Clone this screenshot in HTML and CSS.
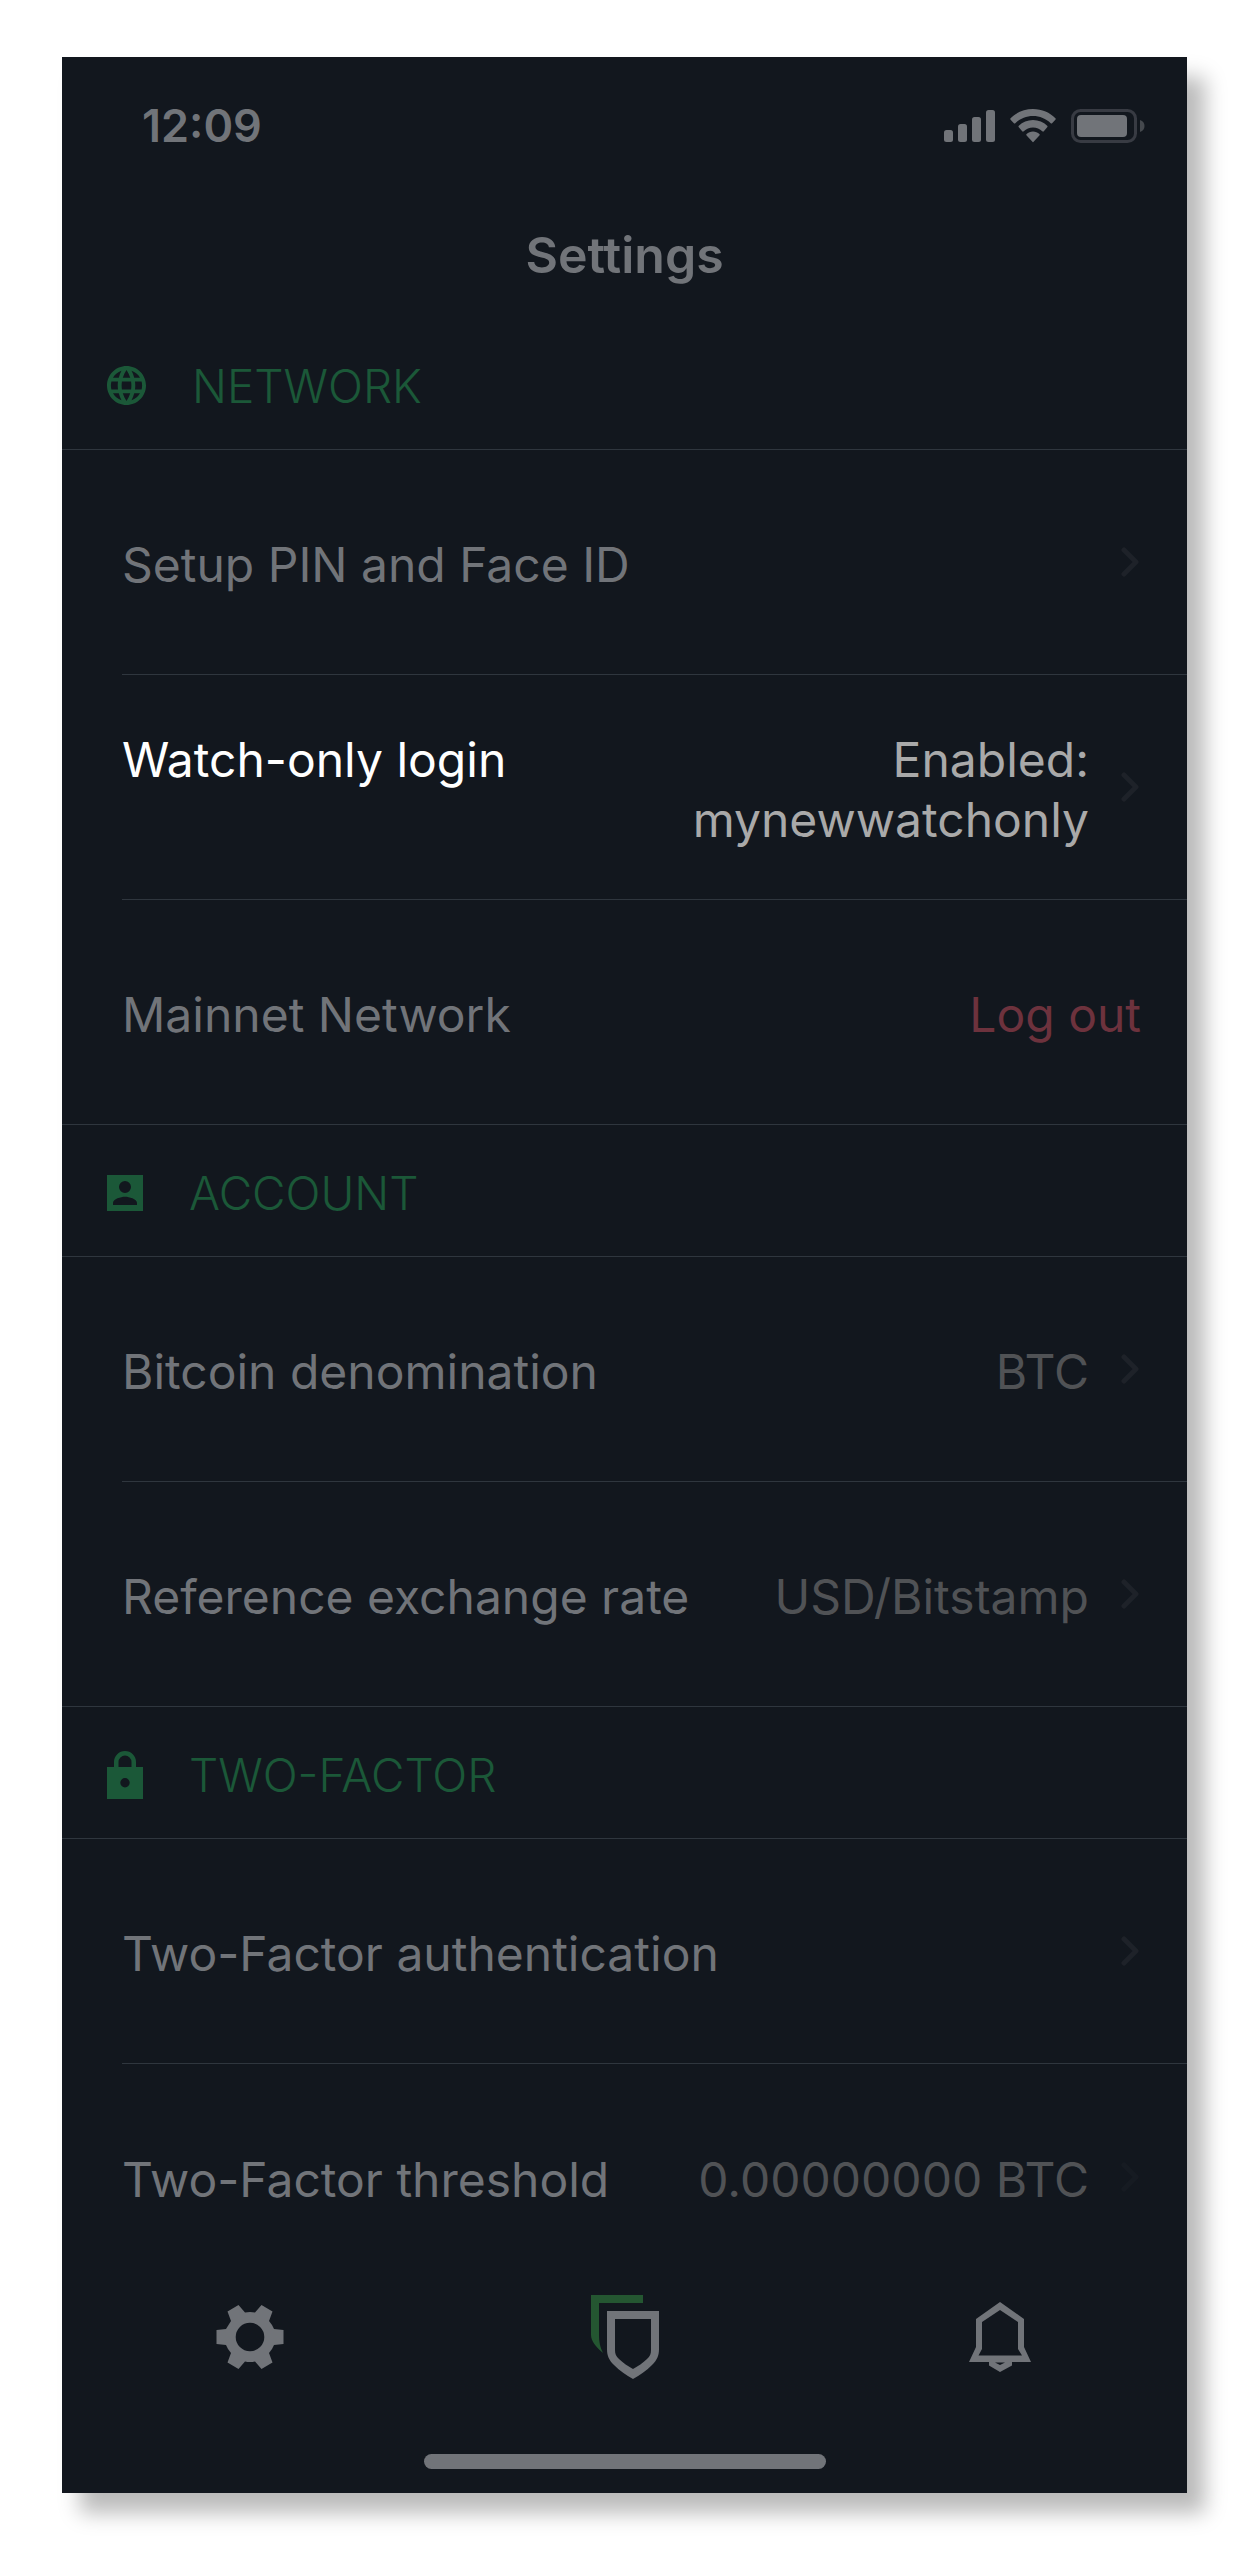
FILE: index.html
```html
<!DOCTYPE html>
<html lang="en">
  <head>
    <meta charset="UTF-8" />
    <meta name="viewport" content="width=device-width, initial-scale=1.0" />
    <title>Settings</title>
    <link rel="stylesheet" href="styles.css">
  </head>
  <body>
    <div class="screen">
      <div class="status-bar">
        <span class="time">12:09</span>
        <div class="status-icons">
          <svg width="51" height="34" viewBox="0 0 51 34" fill="currentColor">
            <rect x="0" y="21" width="9" height="12" rx="2.5" />
            <rect x="14" y="15" width="9" height="18" rx="2.5" />
            <rect x="28" y="8" width="9" height="25" rx="2.5" />
            <rect x="42" y="1" width="9" height="32" rx="2.5" />
          </svg>
          <svg width="46" height="34" viewBox="0 0 46 34" fill="currentColor">
            <path d="M23 0C14 0 6 3.500 .600 9.300a1 1 0 0 0 0 1.400l3.300 3.500a1 1 0 0 0 1.400 0C10 9.700 16.200 7 23 7s13 2.700 17.700 7.200a1 1 0 0 0 1.400 0l3.300-3.500a1 1 0 0 0 0-1.400C40 3.500 32 0 23 0z" />
            <path d="M23 11c-5.500 0-10.500 2.200-14.200 5.800a1 1 0 0 0 0 1.500l3.400 3.900a1 1 0 0 0 1.500.100A13.500 13.500 0 0 1 23 18.500c3.600 0 6.800 1.400 9.300 3.800a1 1 0 0 0 1.500-.100l3.400-3.900a1 1 0 0 0 0-1.500C33.500 13.200 28.500 11 23 11z" />
            <path d="M23 22.500c-2.500 0-4.700 1-6.400 2.600a1 1 0 0 0 0 1.500l5.600 6a1 1 0 0 0 1.600 0l5.600-6a1 1 0 0 0 0-1.500c-1.700-1.600-3.900-2.600-6.400-2.600z" />
          </svg>
          <svg width="74" height="34" viewBox="0 0 74 34">
            <rect class="battery-case" x="1.500" y="1.500" width="63" height="31" rx="8" />
            <rect x="6" y="6" width="50" height="22" rx="4" fill="currentColor" />
            <path class="battery-cap" d="M69 11c3 1 4.500 3.300 4.500 6s-1.500 5-4.500 6z" />
          </svg>
        </div>
      </div>

      <h1 class="page-title">Settings</h1>

      <main>
        <section>
          <h2 class="section-title">
            <svg class="section-icon" width="39" height="39" viewBox="2 2 20 20" fill="currentColor">
              <path d="M11.990 2C6.470 2 2 6.480 2 12s4.470 10 9.990 10C17.520 22 22 17.520 22 12S17.520 2 11.990 2zm6.930 6h-2.950a15.650 15.650 0 0 0-1.380-3.560A8.030 8.030 0 0 1 18.920 8zM12 4.040c.830 1.200 1.480 2.530 1.910 3.960h-3.820c.430-1.430 1.080-2.760 1.910-3.960zM4.260 14C4.100 13.360 4 12.690 4 12s.100-1.360.260-2h3.380c-.080.660-.140 1.320-.140 2s.060 1.340.140 2H4.260zm.820 2h2.950c.320 1.250.780 2.450 1.380 3.560A7.987 7.987 0 0 1 5.080 16zm2.950-8H5.080a7.987 7.987 0 0 1 4.330-3.560A15.650 15.650 0 0 0 8.030 8zM12 19.960c-.830-1.200-1.480-2.530-1.910-3.960h3.820c-.430 1.430-1.080 2.760-1.910 3.960zM14.340 14H9.660c-.090-.660-.160-1.320-.160-2s.070-1.350.160-2h4.680c.090.650.160 1.320.160 2s-.070 1.340-.160 2zm.250 5.560c.600-1.110 1.060-2.310 1.380-3.560h2.950a8.030 8.030 0 0 1-4.330 3.560zM16.360 14c.080-.660.140-1.320.140-2s-.060-1.340-.140-2h3.380c.160.640.260 1.310.260 2s-.100 1.360-.260 2h-3.380z" />
            </svg>
            NETWORK
          </h2>
          <a class="row" href="#">
            <span class="row-body"><span class="label">Setup PIN and Face ID</span></span>
            <svg class="chevron" viewBox="0 0 18 30"><path d="M3 3l12 12L3 27" /></svg>
          </a>
          <a class="row row-active" href="#">
            <span class="row-body">
              <span class="label">Watch-only login</span>
              <span class="value">Enabled: mynewwatchonly</span>
            </span>
            <svg class="chevron" viewBox="0 0 18 30"><path d="M3 3l12 12L3 27" /></svg>
          </a>
          <div class="row row-last">
            <span class="row-body">
              <span class="label">Mainnet Network</span>
              <button type="button" class="logout">Log out</button>
            </span>
          </div>
        </section>

        <section>
          <h2 class="section-title">
            <svg class="section-icon" width="36" height="36" viewBox="0 0 36 36">
              <path fill="currentColor" fill-rule="evenodd" d="M0 0h36v36H0zM18 6a6 6 0 1 0 0 12a6 6 0 0 0 0-12zM6 30h24v-2c0-4-8-6.200-12-6.200S6 24 6 28z" />
            </svg>
            ACCOUNT
          </h2>
          <a class="row" href="#">
            <span class="row-body">
              <span class="label">Bitcoin denomination</span>
              <span class="value">BTC</span>
            </span>
            <svg class="chevron" viewBox="0 0 18 30"><path d="M3 3l12 12L3 27" /></svg>
          </a>
          <a class="row row-last" href="#">
            <span class="row-body">
              <span class="label">Reference exchange rate</span>
              <span class="value">USD/Bitstamp</span>
            </span>
            <svg class="chevron" viewBox="0 0 18 30"><path d="M3 3l12 12L3 27" /></svg>
          </a>
        </section>

        <section>
          <h2 class="section-title">
            <svg class="section-icon" width="36" height="48" viewBox="0 0 36 48">
              <path fill="currentColor" fill-rule="evenodd" d="M0 16h7v-5a11 11 0 0 1 22 0v5h7v32H0zM11.500 16h13v-5a6.500 6.500 0 0 0-13 0zM18 27a4.700 4.700 0 1 0 0 9.400a4.700 4.700 0 0 0 0-9.400z" />
            </svg>
            TWO-FACTOR
          </h2>
          <a class="row" href="#">
            <span class="row-body"><span class="label">Two-Factor authentication</span></span>
            <svg class="chevron" viewBox="0 0 18 30"><path d="M3 3l12 12L3 27" /></svg>
          </a>
          <a class="row row-faded" href="#">
            <span class="row-body">
              <span class="label">Two-Factor threshold</span>
              <span class="value">0.00000000 BTC</span>
            </span>
            <svg class="chevron" viewBox="0 0 18 30"><path d="M3 3l12 12L3 27" /></svg>
          </a>
        </section>
      </main>

      <nav class="tab-bar">
        <a href="#" aria-label="Settings">
          <svg width="68" height="68" viewBox="-34 -34 68 68" fill="currentColor">
            <path fill-rule="evenodd" d="M-24 -8L-19 -16L-22.500 -25.500L-11.500 -32L-5 -24.500Q0 -25.500 5 -24.500L11.500 -32L22.500 -25.500L19 -16Q22.500 -12 24 -8L33.500 -7V7L24 8Q22.500 12 19 16L22.500 25.500L11.500 32L5 24.500Q0 25.500 -5 24.500L-11.500 32L-22.500 25.500L-19 16Q-22.500 12 -24 8L-33.500 7V-7ZM0 -14.300a14.300 14.300 0 1 0 0 28.600a14.300 14.300 0 0 0 0-28.600z" />
          </svg>
        </a>
        <a href="#" aria-label="Wallets">
          <svg width="68" height="84" viewBox="0 0 68 84">
            <path class="shield-back" d="M0 0h52v8H8v32c0 7 1 12 4 18C5 52 0 46 0 40z" />
            <path fill="currentColor" fill-rule="evenodd" d="M16 16h52v38c0 7-2 11-7 16c-6 6-12 10-19 14c-7-4-13-8-19-14c-5-5-7-9-7-16zM24 24v31c0 4 1 6 4 9c4 4 9 7 14 10c5-3 10-6 14-10c3-3 4-5 4-9V24z" />
          </svg>
        </a>
        <a href="#" aria-label="Notifications">
          <svg width="62" height="70" viewBox="0 0 62 70">
            <path fill="currentColor" fill-rule="evenodd" d="M31 0L55 17V45L62 60H43V63.500L31 70L20 63.500V60H0L7 45V17zM31 8L13 20V47L9.500 53.500H53L49 47V20zM26 60.500L31 63L36 60.500z" />
          </svg>
        </a>
      </nav>
      <div class="home-indicator"></div>
    </div>
  </body>
</html>
```
FILE: styles.css
```css
* {
  box-sizing: border-box;
}

body {
  margin: 0;
  padding: 57px 63px 57px 62px;
  background-color: #fff;
  font-family: Inter, "Liberation Sans", sans-serif;
  font-size: 48px;
  line-height: 60px;
}

a {
  color: inherit;
  text-decoration: none;
}

svg {
  display: block;
  flex-shrink: 0;
}

.screen {
  display: flex;
  flex-direction: column;
  background-color: #12171e;
  color: #717479;
  box-shadow: 18px 20px 20px rgba(0, 0, 0, 0.27);
}

.status-bar {
  display: flex;
  align-items: center;
  justify-content: space-between;
  height: 138px;
  padding: 0 42px 0 80px;
}

.time {
  font-size: 45px;
  font-weight: 600;
}

.status-icons {
  display: flex;
  gap: 15px;
}

.battery-case {
  fill: none;
  stroke: #383b43;
  stroke-width: 3;
}

.battery-cap {
  fill: #45494e;
}

.page-title {
  height: 123px;
  margin: 0;
  font-size: 50px;
  font-weight: 600;
  line-height: 120px;
  text-align: center;
}

.section-title {
  display: flex;
  align-items: center;
  height: 132px;
  margin: 0;
  padding: 4px 45px 0;
  border-bottom: 1px solid #2f363e;
  color: #1b5838;
  font-size: 46px;
  font-weight: 300;
}

.section-icon {
  margin-right: 46px;
}

.row {
  display: flex;
  align-items: center;
  min-height: 225px;
  margin-left: 60px;
  padding-right: 46px;
  border-bottom: 1px solid #2f363e;
}

.row-last {
  margin-left: 0;
  padding-left: 60px;
}

.row-body {
  display: flex;
  flex: 1;
  justify-content: space-between;
  gap: 40px;
  padding-top: 6px;
}

.label {
  white-space: nowrap;
}

.value {
  color: #505255;
  text-align: right;
}

.row-active {
  color: #fff;
}

.row-active .value {
  color: #a9a9a9;
}

.row-faded {
  border-bottom: none;
}

.row-faded .chevron {
  opacity: 0.4;
}

.chevron {
  width: 18px;
  height: 30px;
  margin: 0 2px 0 32px;
  fill: none;
  stroke: #1e2229;
  stroke-width: 5;
  stroke-linecap: round;
  stroke-linejoin: round;
}

.logout {
  padding: 0;
  border: none;
  background: none;
  color: #6d323d;
  font: inherit;
  cursor: pointer;
}

.tab-bar {
  display: flex;
}

.tab-bar a {
  display: flex;
  flex: 1;
  align-items: center;
  justify-content: center;
  height: 96px;
}

.shield-back {
  fill: #245631;
}

.home-indicator {
  align-self: center;
  width: 402px;
  height: 15px;
  margin: 69px 0 24px;
  border-radius: 8px;
  background-color: #717479;
}
```
